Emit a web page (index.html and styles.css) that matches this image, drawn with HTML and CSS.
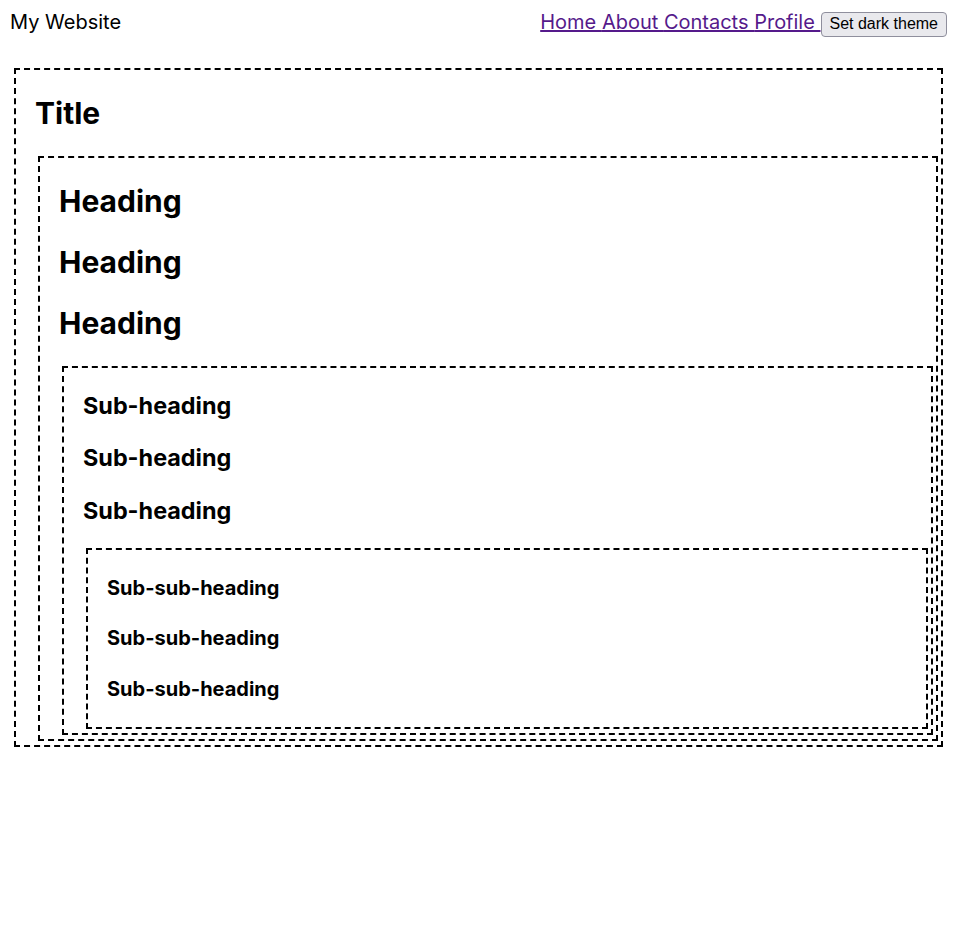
FILE: index.html
```html
<!DOCTYPE html>
<html lang="en">
<head>
  <meta charset="UTF-8" />
  <meta name="viewport" content="width=device-width, initial-scale=1" />
  <title>My Website</title>
  <link rel="stylesheet" href="styles.css">
</head>
<body>
  <header class="site-header">
    <span class="site-name">My Website</span>
    <nav class="site-nav">
      <a href="#">Home </a><a href="#">About </a><a href="#">Contacts </a><a href="#">Profile </a>
      <button class="theme-toggle">Set dark theme</button>
    </nav>
  </header>

  <main>
    <section class="box">
      <h1 class="title">Title</h1>
      <section class="box">
        <h2>Heading</h2>
        <h2>Heading</h2>
        <h2>Heading</h2>
        <section class="box">
          <h3>Sub-heading</h3>
          <h3>Sub-heading</h3>
          <h3>Sub-heading</h3>
          <section class="box">
            <h4>Sub-sub-heading</h4>
            <h4>Sub-sub-heading</h4>
            <h4>Sub-sub-heading</h4>
          </section>
        </section>
      </section>
    </section>
  </main>
</body>
</html>
```

FILE: styles.css
```css
body {
  margin: 8px;
  font-family: Inter, "Noto Sans", sans-serif;
  font-size: 20px;
  color: #000;
  background-color: #fff;
}
.site-header {
  display: flex;
  justify-content: space-between;
  align-items: baseline;
  padding: 2px;
}
.site-nav a {
  color: #551a8b;
}
.theme-toggle {
  font-family: "Liberation Sans", Arial, sans-serif;
  font-size: 16px;
  color: #000;
  background-color: #e9e9ed;
  border: 1px solid #8f8f9d;
  border-radius: 4px;
  padding: 2.5px 8px;
}
main {
  margin-top: 29px;
  padding: 0 3px;
}
.box {
  margin: 3px 3px 4px;
  border: 2px dashed #000;
  padding: 0 0 0 19px;
}
.box h1,
.box h2,
.box h3,
.box h4 {
  font-weight: 700;
  line-height: normal;
}
.title,
.box h2 {
  font-size: 30px;
  margin: 25px 0;
}
.box h3 {
  font-size: 23.4px;
  margin: 23.4px 0;
}
.box h4 {
  font-size: 20px;
  line-height: 25px;
  margin: 25.5px 0;
}
```
